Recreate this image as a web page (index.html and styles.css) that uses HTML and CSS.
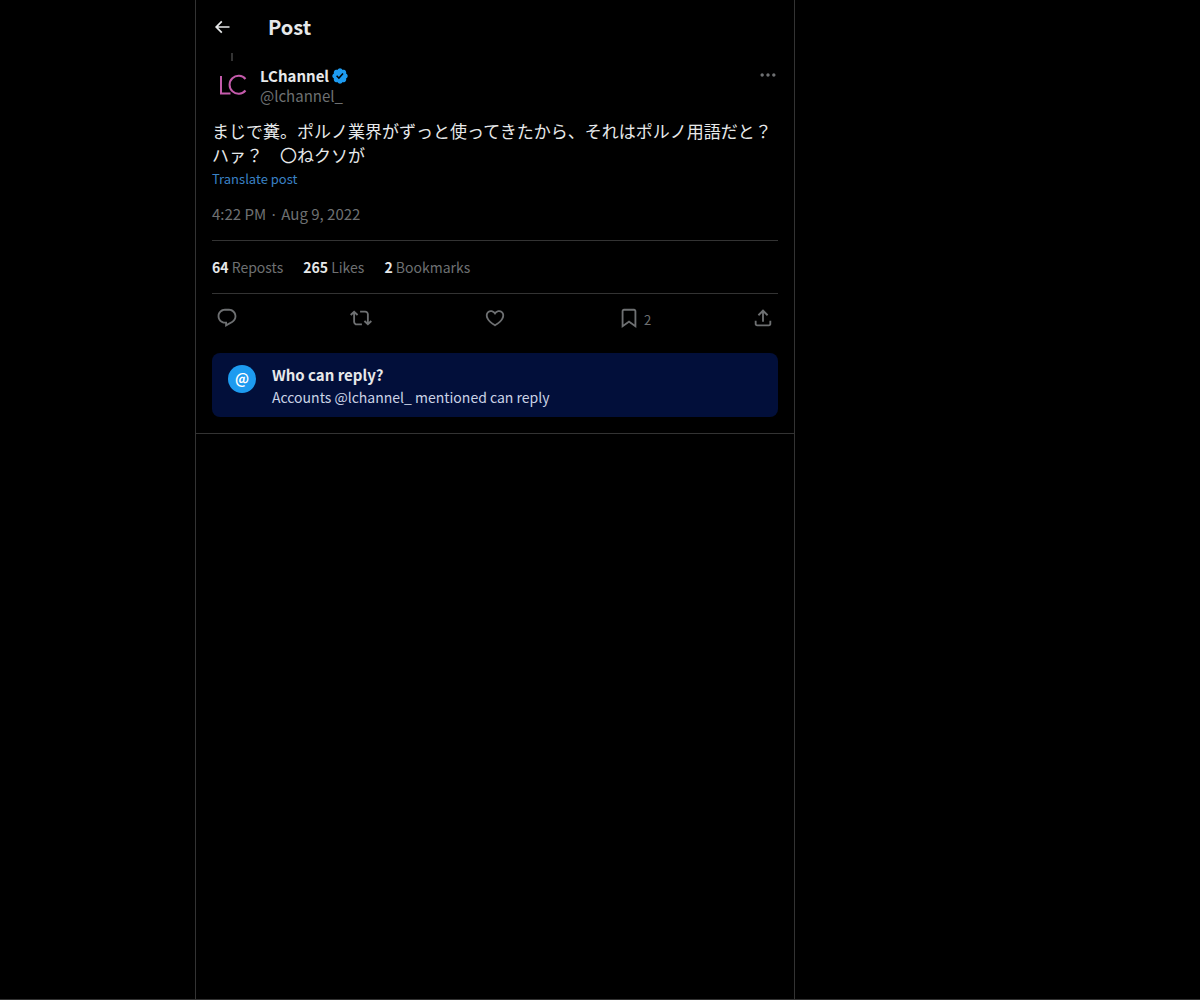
FILE: index.html
```
<!DOCTYPE html>
<html lang="ja">
<head>
    <meta charset="UTF-8">
    <meta name="viewport" content="width=device-width, initial-scale=1">
    <title>Post</title>
    <link rel="stylesheet" href="styles.css">
</head>
<body>

<div class="layout">
    <main class="column">
        <header class="top-bar">
            <button class="icon-btn back" type="button" aria-label="Back">
                <svg viewBox="0 0 24 24"><path d="M7.414 13l5.043 5.04-1.414 1.42L3.586 12l7.457-7.46 1.414 1.42L7.414 11H21v2H7.414z"/></svg>
            </button>
            <h1>Post</h1>
        </header>

        <article class="post">
            <div class="thread-line"></div>
            <div class="author">
                <svg class="avatar" viewBox="0 0 40 40" role="img" aria-label="LChannel">
                    <path d="M9 11v17.500h9.500M33.500 14a9 9 0 1 0 0 11.500"/>
                </svg>
                <div class="names">
                    <div class="name-row">
                        <a class="name" href="#">LChannel</a>
                        <svg class="verified" viewBox="0 0 22 22" role="img" aria-label="Verified account"><path d="M20.396 11c-.018-.646-.215-1.275-.57-1.816-.354-.54-.852-.972-1.438-1.246.223-.607.270-1.264.140-1.897-.131-.634-.437-1.218-.882-1.687-.470-.445-1.053-.750-1.687-.882-.633-.130-1.290-.083-1.897.140-.273-.587-.704-1.086-1.245-1.440S11.647 1.620 11 1.604c-.646.017-1.273.213-1.813.568s-.969.854-1.240 1.440c-.608-.223-1.267-.272-1.902-.140-.635.130-1.220.436-1.690.882-.445.470-.749 1.055-.878 1.688-.130.633-.080 1.290.144 1.896-.587.274-1.087.705-1.443 1.245-.356.540-.555 1.170-.574 1.817.020.647.218 1.276.574 1.817.356.540.856.972 1.443 1.245-.224.606-.274 1.263-.144 1.896.130.634.433 1.218.877 1.688.470.443 1.054.747 1.687.878.633.132 1.290.084 1.897-.136.274.586.705 1.084 1.246 1.439.540.354 1.170.551 1.816.569.647-.016 1.276-.213 1.817-.567s.972-.854 1.245-1.440c.604.239 1.266.296 1.903.164.636-.132 1.220-.447 1.680-.907.460-.460.776-1.044.908-1.681s.075-1.299-.165-1.903c.586-.274 1.084-.705 1.439-1.246.354-.540.551-1.170.569-1.816zM9.662 14.850l-3.429-3.428 1.293-1.302 2.072 2.072 4.400-4.794 1.347 1.246z"/></svg>
                    </div>
                    <a class="handle" href="#">@lchannel_</a>
                </div>
                <button class="icon-btn more" type="button" aria-label="More">
                    <svg viewBox="0 0 24 24"><path d="M3 12c0-1.100.900-2 2-2s2 .900 2 2-.900 2-2 2-2-.900-2-2zm9 2c1.100 0 2-.900 2-2s-.900-2-2-2-2 .900-2 2 .900 2 2 2zm7 0c1.100 0 2-.900 2-2s-.900-2-2-2-2 .900-2 2 .900 2 2 2z"/></svg>
                </button>
            </div>

            <p class="text">まじで糞。ポルノ業界がずっと使ってきたから、それはポルノ用語だと？ハァ？　〇ねクソが</p>
            <button class="translate" type="button">Translate post</button>

            <div class="date"><a href="#">4:22 PM · Aug 9, 2022</a></div>

            <div class="stats">
                <a href="#"><b>64</b> Reposts</a>
                <a href="#"><b>265</b> Likes</a>
                <a href="#"><b>2</b> Bookmarks</a>
            </div>

            <div class="actions">
                <button class="icon-btn" type="button" aria-label="Reply">
                    <svg viewBox="0 0 24 24"><path d="M1.751 10c0-4.420 3.584-8 8.005-8h4.366c4.490 0 8.129 3.640 8.129 8.130 0 2.960-1.607 5.680-4.196 7.110l-8.054 4.460v-3.690h-.067c-4.490.100-8.183-3.510-8.183-8.010zm8.005-6c-3.317 0-6.005 2.690-6.005 6 0 3.370 2.770 6.080 6.138 6.010l.351-.010h1.761v2.300l5.087-2.810c1.951-1.080 3.163-3.130 3.163-5.360 0-3.390-2.744-6.130-6.129-6.130H9.756z"/></svg>
                </button>
                <button class="icon-btn" type="button" aria-label="Repost">
                    <svg viewBox="0 0 24 24"><path d="M4.500 3.880l4.432 4.140-1.364 1.460L5.500 7.550V16c0 1.100.896 2 2 2H13v2H7.500c-2.209 0-4-1.790-4-4V7.550L1.432 9.480.068 8.020 4.500 3.880zM16.500 6H11V4h5.500c2.209 0 4 1.790 4 4v8.450l2.068-1.930 1.364 1.460-4.432 4.140-4.432-4.140 1.364-1.460 2.068 1.930V8c0-1.100-.896-2-2-2z"/></svg>
                </button>
                <button class="icon-btn" type="button" aria-label="Like">
                    <svg viewBox="0 0 24 24"><path d="M16.697 5.500c-1.222-.060-2.679.510-3.890 2.160l-.805 1.090-.806-1.090C9.984 6.010 8.526 5.440 7.304 5.500c-1.243.070-2.349.780-2.910 1.910-.552 1.120-.633 2.780.479 4.820 1.074 1.970 3.257 4.270 7.129 6.610 3.870-2.340 6.052-4.640 7.126-6.610 1.111-2.040 1.030-3.700.477-4.820-.561-1.130-1.666-1.840-2.908-1.910zm4.187 7.690c-1.351 2.480-4.001 5.120-8.379 7.670l-.503.300-.504-.300c-4.379-2.550-7.029-5.190-8.382-7.670-1.360-2.500-1.410-4.860-.514-6.670.887-1.790 2.647-2.910 4.601-3.010 1.651-.090 3.368.560 4.798 2.010 1.429-1.450 3.146-2.100 4.796-2.010 1.954.100 3.714 1.220 4.601 3.010.896 1.810.846 4.170-.514 6.670z"/></svg>
                </button>
                <button class="icon-btn" type="button" aria-label="Bookmark">
                    <svg viewBox="0 0 24 24"><path d="M4 4.500C4 3.120 5.119 2 6.500 2h11C18.881 2 20 3.120 20 4.500v18.440l-8-5.710-8 5.710V4.500zM6.500 4c-.276 0-.500.220-.500.500v14.560l6-4.290 6 4.290V4.500c0-.280-.224-.500-.500-.500h-11z"/></svg>
                    <span class="count">2</span>
                </button>
                <button class="icon-btn" type="button" aria-label="Share">
                    <svg viewBox="0 0 24 24"><path d="M12 2.590l5.700 5.700-1.410 1.420L13 6.410V16h-2V6.410l-3.300 3.300-1.410-1.420L12 2.590zM21 15l-.020 3.510c0 1.380-1.120 2.490-2.500 2.490H5.500C4.110 21 3 19.880 3 18.500V15h2v3.500c0 .280.220.500.500.500h12.980c.280 0 .500-.220.500-.500L19 15h2z"/></svg>
                </button>
            </div>

            <section class="reply-note">
                <span class="at-badge">@</span>
                <div>
                    <h2>Who can reply?</h2>
                    <p>Accounts @lchannel_ mentioned can reply</p>
                </div>
            </section>
        </article>
    </main>
</div>

</body>
</html>
```

FILE: styles.css
```
* {
    box-sizing: border-box;
}

body {
    margin: 0;
    background-color: #000;
    color: #e7e9ea;
    font-family: "Noto Sans CJK JP", "Noto Sans", sans-serif;
    font-size: 15px;
    line-height: 20px;
}

h1, h2, p {
    margin: 0;
}

a {
    color: inherit;
    text-decoration: none;
}

button {
    padding: 0;
    border: none;
    background: none;
    color: inherit;
    font: inherit;
    cursor: pointer;
}

svg {
    display: block;
    fill: currentColor;
}

.layout {
    display: grid;
    grid-template-columns: minmax(0, 195fr) minmax(0, 600px) minmax(0, 405fr);
    min-height: 100vh;
    border-bottom: 1px solid #333;
}

.column {
    grid-column: 2;
    border-left: 1px solid #333;
    border-right: 1px solid #333;
}

.top-bar {
    display: flex;
    align-items: center;
    gap: 36px;
    height: 53px;
    padding: 0 16px;
}

.top-bar h1 {
    font-size: 20px;
    line-height: 24px;
}

.icon-btn {
    display: flex;
    align-items: center;
}

.icon-btn svg {
    flex: none;
    width: 22px;
    height: 22px;
}

.back svg {
    width: 20px;
    height: 20px;
}

.post {
    padding: 0 16px 16px;
    border-bottom: 1px solid #333;
}

.thread-line {
    width: 2px;
    height: 8px;
    margin-left: 19px;
    background-color: #333;
}

.author {
    display: flex;
    align-items: flex-start;
    gap: 8px;
    padding-top: 4px;
}

.avatar {
    width: 40px;
    height: 40px;
    border-radius: 50%;
    fill: none;
    stroke: #c45bab;
    stroke-width: 2;
}

.names {
    flex: 1;
}

.name-row {
    display: flex;
    align-items: center;
    gap: 2px;
    height: 21px;
}

.name {
    font-weight: 700;
}

.verified {
    width: 18px;
    height: 18px;
    color: #1d9bf0;
}

.handle, .more, .date, .stats, .actions {
    color: #6e7072;
}

.more {
    height: 20px;
}

.more svg {
    width: 20px;
    height: 20px;
}

.text {
    margin-top: 13px;
    font-size: 17px;
    line-height: 24px;
}

.translate {
    display: block;
    color: #3a82c6;
    font-size: 13px;
    line-height: 24px;
}

.date {
    padding: 13px 0 16px;
}

.stats {
    display: flex;
    gap: 20px;
    padding: 16px 0;
    border-top: 1px solid #333;
    border-bottom: 1px solid #333;
    font-size: 14px;
}

.stats b {
    color: #e7e9ea;
}

.actions {
    display: flex;
    justify-content: space-between;
    height: 47px;
    padding: 0 4px;
}

/* counts hang outside so the icons stay evenly spaced */
.actions .icon-btn {
    width: 22px;
}

.count {
    padding: 4px 0 0 4px;
    font-size: 13px;
}

.reply-note {
    display: flex;
    gap: 16px;
    margin-top: 12px;
    padding: 12px 16px 10px;
    border-radius: 8px;
    background-color: #020f3a;
}

.reply-note h2 {
    font-size: 15px;
    line-height: 20px;
}

.reply-note p {
    margin-top: 2px;
    color: #cbd3e6;
    font-size: 14px;
}

.at-badge {
    width: 28px;
    height: 28px;
    border-radius: 50%;
    background-color: #1d9bf0;
    color: #fff;
    font-size: 14px;
    font-weight: 700;
    line-height: 26px;
    text-align: center;
}
```
